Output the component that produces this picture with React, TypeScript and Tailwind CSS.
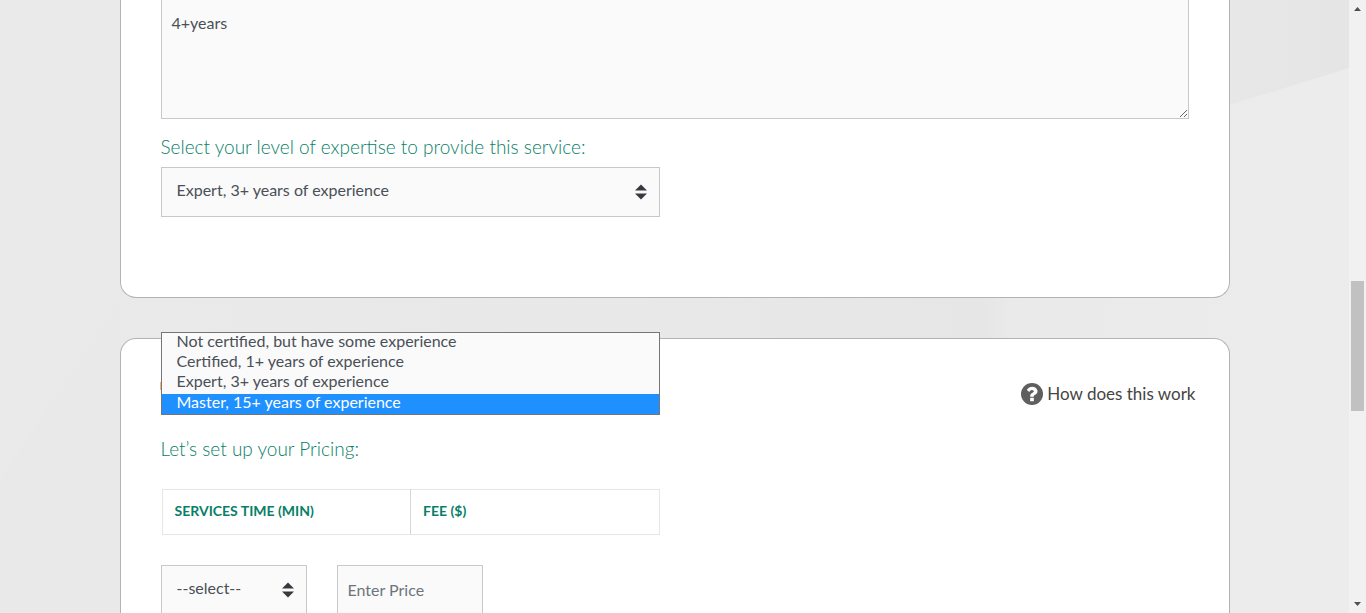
import { useState } from "react";

const LEVELS = [
  "Not certified, but have some experience",
  "Certified, 1+ years of experience",
  "Expert, 3+ years of experience",
  "Master, 15+ years of experience",
];

function SortArrows() {
  return (
    <svg
      aria-hidden="true"
      viewBox="0 0 12 16"
      className="pointer-events-none absolute top-1/2 right-[13px] h-4 w-3 -translate-y-1/2"
    >
      <path d="M6 0.500 12 6.500H0Z" fill="#343a40" />
      <path d="M6 15.500 0 9.500H12Z" fill="#343a40" />
    </svg>
  );
}

function Backdrop() {
  return (
    <svg
      aria-hidden="true"
      viewBox="0 0 1349 613"
      preserveAspectRatio="none"
      className="absolute inset-0 h-full w-full"
    >
      <defs>
        <linearGradient id="shade" x1="0" y1="0" x2="1" y2="0">
          <stop offset="0" stopColor="#eaeaea" />
          <stop offset="0.5" stopColor="#e8e8e8" />
          <stop offset="0.73" stopColor="#e6e6e6" />
          <stop offset="0.75" stopColor="#eaeaea" />
          <stop offset="1" stopColor="#ececec" />
        </linearGradient>
        <linearGradient id="corner" x1="1" y1="0" x2="0" y2="0">
          <stop offset="0" stopColor="#e5e5e5" />
          <stop offset="1" stopColor="#e8e8e8" />
        </linearGradient>
      </defs>
      <rect width="1349" height="613" fill="url(#shade)" />
      <path d="M1200 0H1349V68L1200 114Z" fill="url(#corner)" />
      <path d="M120 300 40 420 0 480V613H120Z" fill="#e9e9e9" />
    </svg>
  );
}

function ScrollTrack() {
  return (
    <div aria-hidden="true" className="flex w-[17px] shrink-0 flex-col items-center bg-[#f1f1f1]">
      <svg viewBox="0 0 17 17" className="h-[17px] w-full shrink-0">
        <path d="M5 11 8.500 7 12 11Z" fill="#505050" />
      </svg>
      <div className="grow-[264]" />
      <div className="w-[13px] grow-[130] bg-[#c1c1c1]" />
      <div className="grow-[185]" />
      <svg viewBox="0 0 17 17" className="h-[17px] w-full shrink-0">
        <path d="M5 6 8.500 10 12 6Z" fill="#505050" />
      </svg>
    </div>
  );
}

export default function App() {
  const [level, setLevel] = useState(LEVELS[2]);

  return (
    <div className="flex h-screen overflow-hidden font-['Lato','Open_Sans',sans-serif] text-base text-[#495057]">
      <div className="relative min-w-0 flex-1 overflow-hidden">
        <Backdrop />
        <main className="relative mx-auto flex max-w-[1110px] flex-col gap-10">
          <section className="rounded-b-2xl border border-t-0 border-[#b3b3b3] bg-white px-10 pb-20">
            <textarea
              aria-label="Experience"
              defaultValue="4+years"
              className="block h-[119px] w-full resize border border-t-0 border-[#c8c8c8] bg-[#fafafa] px-[10px] pt-[11px] leading-6 outline-none"
            />
            <label
              htmlFor="level"
              className="mt-4 block text-[19px] leading-6 font-light text-[#078068]"
            >
              Select your level of expertise to provide this service:
            </label>
            <div className="relative mt-2 w-full max-w-[499px]">
              <select
                id="level"
                value={level}
                onChange={(event) => setLevel(event.target.value)}
                className="block h-[50px] w-full appearance-none border border-[#c8c8c8] bg-[#fafafa] px-[15px] pb-1 outline-none"
              >
                {LEVELS.map((item) => (
                  <option key={item}>{item}</option>
                ))}
              </select>
              <SortArrows />
              <ul
                role="listbox"
                aria-label="Level of expertise"
                className="absolute top-[165px] left-0 z-10 w-full border border-[#767676] bg-[#fafafa]"
              >
                {LEVELS.map((item) => (
                  <li
                    key={item}
                    role="option"
                    aria-selected={item === LEVELS[3]}
                    onClick={() => setLevel(item)}
                    className="h-5 px-[15px] leading-4 last:mt-px last:bg-[#1e90ff] last:text-white"
                  >
                    {item}
                  </li>
                ))}
              </ul>
            </div>
          </section>

          <section className="rounded-t-2xl border border-b-0 border-[#b3b3b3] bg-white px-10 pt-[43px] pb-20">
            <div className="-mr-[7px] flex items-start justify-between">
              <span aria-hidden="true" className="-ml-px h-2 w-px bg-[#f9b27c]" />
              <a href="#help" className="flex items-center gap-1 text-[17px] leading-6 text-[#444]">
                <svg aria-hidden="true" viewBox="0 0 1536 1536" className="h-[22px] w-[22px]">
                  <circle cx="768" cy="768" r="768" fill="#5f5f5f" />
                  <path
                    d="M896 1248v-192q0-14-9-23t-23-9H672q-14 0-23 9t-9 23v192q0 14 9 23t23 9h192q14 0 23-9t9-23zm256-672q0-88-55.500-163T958 297t-170-41q-243 0-371 213-15 24 8 42l132 100q7 6 19 6 16 0 25-12 53-68 86-92 34-24 86-24 48 0 85.500 26t37.500 59q0 38-20 61t-68 45q-63 28-115.500 86.500T640 892v36q0 14 9 23t23 9h192q14 0 23-9t9-23q0-19 21.500-49.500T972 829q32-18 49-28.500t46-35 44.500-48 28-60.500 12.500-81z"
                    fill="#fff"
                  />
                </svg>
                How does this work
              </a>
            </div>
            <h2 className="mt-[31px] text-[19px] leading-6 font-light text-[#078068]">
              Let’s set up your Pricing:
            </h2>
            <div className="mt-7 max-w-[499px] pl-px">
              <table className="w-full table-fixed border-collapse text-left text-sm leading-5 text-[#078068]">
                <thead>
                  <tr>
                    <th scope="col" className="h-[45px] border border-[#e6e6e6] border-r-[#d6d6d6] px-3 pt-0 pb-[3px] font-bold">
                      SERVICES TIME (MIN)
                    </th>
                    <th scope="col" className="h-[45px] border border-[#e6e6e6] px-3 pt-0 pb-[3px] font-bold">
                      FEE ($)
                    </th>
                  </tr>
                </thead>
              </table>
            </div>
            <div className="mt-[30px] flex gap-[30px]">
              <div className="relative w-[146px]">
                <select
                  aria-label="Service time"
                  className="block h-[50px] w-full appearance-none border border-[#c8c8c8] bg-[#fafafa] px-[15px] pb-1 outline-none"
                >
                  <option>--select--</option>
                </select>
                <SortArrows />
              </div>
              <input
                type="text"
                aria-label="Price"
                placeholder="Enter Price"
                className="h-[50px] w-[146px] border border-[#c8c8c8] bg-[#fafafa] px-[10px] pb-[2px] outline-none placeholder:text-[#6c757d]"
              />
            </div>
          </section>
        </main>
      </div>
      <ScrollTrack />
    </div>
  );
}
